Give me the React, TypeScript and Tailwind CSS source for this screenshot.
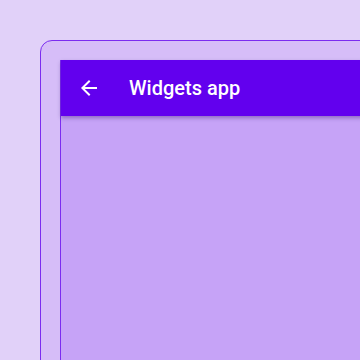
export default function App() {
  return (
    <div className="w-[360px] h-[360px] overflow-hidden bg-[#e1d1f9] pt-10 pl-10" style={{ fontFamily: "Roboto, 'Noto Sans', sans-serif" }}>
      <div className="w-[400px] h-[400px] rounded-xl border border-[#7b2cf0] bg-[#d6bdf8] pt-[19px] pl-[19px]">
        <div className="w-[400px] h-[400px] border-l border-[#7b2cf0] bg-[#c6a3f7] flex flex-col">
          <div className="h-14 bg-[#6200ee] flex items-center pl-4 shadow-[0_2px_4px_rgba(40,0,100,0.35)]">
            <svg width="24" height="24" viewBox="0 0 24 24" fill="#ffffff">
              <path d="M20 11H7.83l5.59-5.59L12 4l-8 8 8 8 1.41-1.41L7.83 13H20v-2z" />
            </svg>
            <span className="ml-7 text-white text-[20px] font-medium">Widgets app</span>
          </div>
        </div>
      </div>
    </div>
  );
}
